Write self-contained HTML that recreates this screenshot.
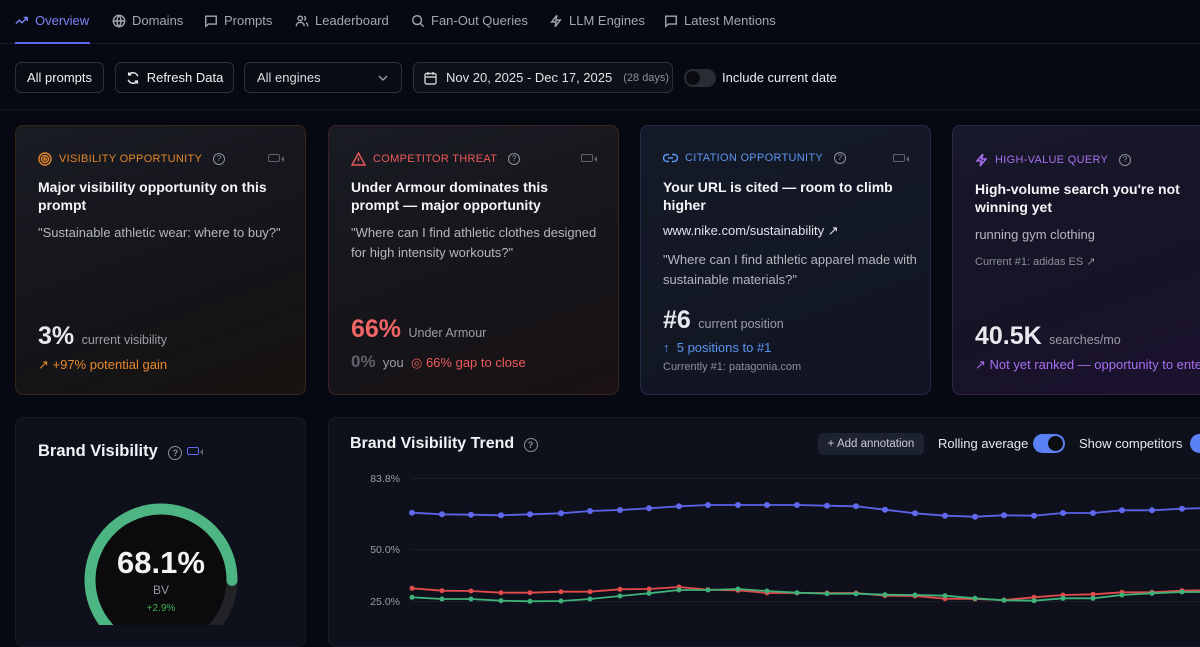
<!DOCTYPE html>
<html><head><meta charset="utf-8"><style>
*{box-sizing:border-box;margin:0;padding:0}
body{width:1200px;height:625px;overflow:hidden;background:#070912;font-family:"Liberation Sans",sans-serif;color:#e8e9ee;position:relative}
.abs{position:absolute}
.nav{top:0;left:0;width:1200px;height:44px;border-bottom:1px solid #1b1e29}
.ni{position:absolute;top:13px;font-size:13px;color:#a3a6b3;display:flex;align-items:center;gap:6px}
.ni svg{width:14px;height:14px;stroke:currentColor;fill:none;stroke-width:1.6}
.btn{position:absolute;top:62px;height:31px;border:1px solid #2c303c;border-radius:6px;font-size:13px;display:flex;align-items:center;color:#f1f2f5;background:#0a0c14}
.card{position:absolute;border-radius:8px;border:1px solid #2a2420}
.lbl{position:absolute;top:26px;left:22px;font-size:11px;letter-spacing:.3px;display:flex;align-items:center;gap:7px}
.q{display:inline-block;width:12px;height:12px;border:1.3px solid #8c8f99;border-radius:50%;font-size:8px;line-height:10px;text-align:center;color:#8c8f99;margin-left:4px}
.cam{position:absolute;top:28px;width:12px;height:8px;border:1.3px solid #5f626c;border-radius:2px}
.cam:after{content:"";position:absolute;right:-5px;top:1px;border:3px solid transparent;border-right-color:#5f626c}
.t{position:absolute;left:22px;width:250px;font-size:14px;font-weight:bold;line-height:18px;color:#f4f5f7}
.s{position:absolute;left:22px;font-size:13px;color:#b5b7bf;line-height:19.5px}
.big{font-size:25px;font-weight:bold}
</style></head><body>
<div class="abs nav"></div>
<div class="abs" style="top:42px;left:15px;width:75px;height:2px;background:#5f68ee"></div>
<div class="ni" style="left:15px;color:#7b83f5"><svg viewBox="0 0 16 16"><path d="M1 11l4-4 3 3 6-6M10 4h4v4"/></svg>Overview</div>
<div class="ni" style="left:112px"><svg viewBox="0 0 16 16"><circle cx="8" cy="8" r="6.5"/><path d="M1.5 8h13M8 1.5c-3 3.5-3 9.5 0 13M8 1.5c3 3.5 3 9.5 0 13"/></svg>Domains</div>
<div class="ni" style="left:204px"><svg viewBox="0 0 16 16"><path d="M2 2.5h12v9H5l-3 2.5z"/></svg>Prompts</div>
<div class="ni" style="left:295px"><svg viewBox="0 0 16 16"><circle cx="6" cy="5" r="2.5"/><path d="M1.5 14c0-3 2-4.5 4.5-4.5s4.5 1.5 4.5 4.5M10.5 2.8a2.4 2.4 0 010 4.5M12.5 9.8c1.3.6 2 2 2 4.2"/></svg>Leaderboard</div>
<div class="ni" style="left:411px"><svg viewBox="0 0 16 16"><circle cx="7" cy="7" r="5"/><path d="M11 11l3.5 3.5"/></svg>Fan-Out Queries</div>
<div class="ni" style="left:549px"><svg viewBox="0 0 16 16"><path d="M9 1.5L3 9h5l-1 5.5L13 7H8z"/></svg>LLM Engines</div>
<div class="ni" style="left:664px"><svg viewBox="0 0 16 16"><path d="M2 2.5h12v9H5l-3 2.5z"/></svg>Latest Mentions</div>

<div class="btn" style="left:15px;width:89px;justify-content:center">All prompts</div>
<div class="btn" style="left:115px;width:119px;justify-content:center;gap:7px"><svg width="14" height="14" viewBox="0 0 16 16" fill="none" stroke="#e8e9ee" stroke-width="1.6"><path d="M13.5 6A6 6 0 003 4.5M2.5 10a6 6 0 0010.5 1.5M3 1.5v3h3M13 14.5v-3h-3"/></svg>Refresh Data</div>
<div class="btn" style="left:244px;width:158px;padding-left:12px;color:#dcdde2">All engines<svg style="position:absolute;right:13px;top:12px" width="10" height="6" viewBox="0 0 10 6" fill="none" stroke="#9a9ca6" stroke-width="1.4"><path d="M1 1l4 4 4-4"/></svg></div>
<div class="btn" style="left:413px;width:260px;padding-left:10px;gap:9px;color:#e2e3e8;background:#0e1018"><svg width="13" height="14" viewBox="0 0 13 14" fill="none" stroke="#c9cad0" stroke-width="1.4"><rect x="1" y="2.5" width="11" height="10.5" rx="1.5"/><path d="M1 6h11M4 1v3M9 1v3"/></svg>Nov 20, 2025 - Dec 17, 2025 <span style="font-size:11px;color:#8c8f99;margin-left:2px">(28 days)</span></div>
<div class="abs" style="left:684px;top:69px;width:32px;height:18px;border-radius:9px;background:#2a2c33"><div style="position:absolute;left:2px;top:2px;width:14px;height:14px;border-radius:50%;background:#0b0c10"></div></div>
<div class="abs" style="left:722px;top:70px;font-size:13px;color:#eceef2">Include current date</div>
<div class="abs" style="left:0;top:109px;width:1200px;height:1px;background:#141722"></div>

<!-- card 1 -->
<div class="card" style="left:15px;top:125px;width:291px;height:270px;background:linear-gradient(160deg,#1a1c24,#141419 60%,#17130f);border-color:#35261d">
<div class="lbl" style="color:#e3862a"><svg width="14" height="14" viewBox="0 0 14 14" fill="none" stroke="#e3862a" stroke-width="1.4"><circle cx="7" cy="7" r="6"/><circle cx="7" cy="7" r="3.5"/><circle cx="7" cy="7" r="1.2"/></svg>VISIBILITY OPPORTUNITY<span class="q">?</span></div>
<div class="cam" style="left:252px"></div>
<div class="t" style="top:52px">Major visibility opportunity on this prompt</div>
<div class="s" style="top:97px">"Sustainable athletic wear: where to buy?"</div>
<div class="abs" style="left:22px;top:196px"><span class="big">3%</span> <span style="font-size:12.5px;color:#9c9ea7;margin-left:3px">current visibility</span></div>
<div class="abs" style="left:22px;top:231px;font-size:13px;color:#e8882c">↗ +97% potential gain</div>
</div>
<!-- card 2 -->
<div class="card" style="left:328px;top:125px;width:291px;height:270px;background:linear-gradient(160deg,#1a1c24,#151419 60%,#1a1214);border-color:#3a2224">
<div class="lbl" style="color:#ec5a5a"><svg width="15" height="14" viewBox="0 0 15 14" fill="none" stroke="#ec5a5a" stroke-width="1.4"><path d="M7.5 1L14 13H1z"/><path d="M7.5 5.5v3.5M7.5 10.6v.5"/></svg>COMPETITOR THREAT<span class="q">?</span></div>
<div class="cam" style="left:252px"></div>
<div class="t" style="top:52px;width:215px">Under Armour dominates this prompt — major opportunity</div>
<div class="s" style="top:97px;width:260px">"Where can I find athletic clothes designed for high intensity workouts?"</div>
<div class="abs" style="left:22px;top:189px"><span class="big" style="color:#f06565">66%</span> <span style="font-size:12.5px;color:#9c9ea7;margin-left:3px">Under Armour</span></div>
<div class="abs" style="left:22px;top:226px;font-size:13px;color:#9c9ea7"><span style="font-size:17px;font-weight:bold;color:#5f626c">0%</span>&nbsp; you&nbsp; <span style="color:#ec5a5a">◎ 66% gap to close</span></div>
</div>
<!-- card 3 -->
<div class="card" style="left:640px;top:125px;width:291px;height:270px;background:linear-gradient(160deg,#151a28,#111522);border-color:#1f2a44">
<div class="lbl" style="color:#5c94f0"><svg width="15" height="10" viewBox="0 0 15 10" fill="none" stroke="#5c94f0" stroke-width="1.5"><path d="M6 1.5H4a3.5 3.5 0 000 7h2M9 1.5h2a3.5 3.5 0 010 7H9M5 5h5"/></svg>CITATION OPPORTUNITY<span class="q">?</span></div>
<div class="cam" style="left:252px"></div>
<div class="t" style="top:52px;width:240px">Your URL is cited — room to climb higher</div>
<div class="s" style="top:95px;color:#e2e3e8">www.nike.com/sustainability ↗</div>
<div class="s" style="top:124px;width:260px">"Where can I find athletic apparel made with sustainable materials?"</div>
<div class="abs" style="left:22px;top:180px"><span class="big">#6</span> <span style="font-size:12.5px;color:#9c9ea7;margin-left:3px">current position</span></div>
<div class="abs" style="left:22px;top:214px;font-size:13px;color:#5c94f0">↑&nbsp; 5 positions to #1</div>
<div class="abs" style="left:22px;top:235px;font-size:11px;color:#8c8f99">Currently #1: patagonia.com</div>
</div>
<!-- card 4 -->
<div class="card" style="left:952px;top:125px;width:260px;height:270px;background:linear-gradient(160deg,#17182a,#161326 60%,#1c1230);border-color:#2e2444">
<div class="lbl" style="color:#a86ff0;top:27px"><svg width="13" height="14" viewBox="0 0 13 14" fill="none" stroke="#a86ff0" stroke-width="1.5"><path d="M8 1L2 8h4.5L5 13l6-7H6.5z"/></svg>HIGH-VALUE QUERY<span class="q">?</span></div>
<div class="t" style="top:54px;width:230px">High-volume search you're not winning yet</div>
<div class="s" style="top:99px">running gym clothing</div>
<div class="abs" style="left:22px;top:129px;font-size:11px;color:#8c8f99">Current #1: adidas ES ↗</div>
<div class="abs" style="left:22px;top:196px;white-space:nowrap"><span class="big">40.5K</span> <span style="font-size:12.5px;color:#9c9ea7;margin-left:3px">searches/mo</span></div>
<div class="abs" style="left:22px;top:231px;font-size:13px;color:#a86ff0;white-space:nowrap">↗ Not yet ranked — opportunity to enter</div>
</div>

<!-- bottom -->
<div class="card" style="left:15px;top:417px;width:291px;height:230px;background:#0e111b;border-color:#171a26">
<div class="abs" style="left:22px;top:24px;font-size:16.5px;font-weight:bold;color:#f1f2f5">Brand Visibility <span class="q" style="width:14px;height:14px;line-height:12px;font-size:9px;margin-left:6px">?</span></div>
<div class="cam" style="left:171px;top:29px;border-color:#6366f1"></div>
</div>
<svg class="abs" style="left:0;top:0" width="320" height="625">
<circle cx="161" cy="580" r="71" fill="#0b0b0e" stroke="#222326" stroke-width="11"/>
<circle cx="161" cy="580" r="71" fill="none" stroke="#4db582" stroke-width="11" stroke-linecap="round" stroke-dasharray="303.8 142.3" transform="rotate(115 161 580)"/>
<text x="161" y="573" text-anchor="middle" font-family="Liberation Sans" font-size="31" font-weight="bold" fill="#f3f3f5">68.1%</text>
<text x="161" y="594" text-anchor="middle" font-family="Liberation Sans" font-size="12" fill="#9a9ba2">BV</text>
<text x="161" y="611" text-anchor="middle" font-family="Liberation Sans" font-size="10" fill="#3fae54">+2.9%</text>
</svg>

<div class="card" style="left:328px;top:417px;width:890px;height:230px;background:#0e111b;border-color:#171a26">
<div class="abs" style="left:21px;top:17px;font-size:16px;font-weight:bold;color:#f1f2f5">Brand Visibility Trend <span class="q" style="width:14px;height:14px;line-height:12px;font-size:9px;margin-left:5px">?</span></div>
<div class="abs" style="left:489px;top:15px;width:106px;height:22px;border-radius:5px;background:#1d2230;font-size:11.5px;color:#c9cbd2;line-height:22px;text-align:center">+ Add annotation</div>
<div class="abs" style="left:609px;top:18px;font-size:13px;color:#e8e9ee">Rolling average</div>
<div class="abs" style="left:704px;top:16px;width:32px;height:19px;border-radius:10px;background:#5b82f5"><div style="position:absolute;right:2px;top:2px;width:15px;height:15px;border-radius:50%;background:#0b0c10"></div></div>
<div class="abs" style="left:750px;top:18px;font-size:13px;color:#e8e9ee">Show competitors</div>
<div class="abs" style="left:861px;top:16px;width:32px;height:19px;border-radius:10px;background:#5b82f5"></div>
</div>
<svg class="abs" style="left:0;top:0" width="1200" height="625" font-family="Liberation Sans" font-size="10.5" fill="#9a9ca6">
<text x="400" y="482" text-anchor="end">83.8%</text>
<text x="400" y="553" text-anchor="end">50.0%</text>
<text x="400" y="605" text-anchor="end">25.0%</text>
<g stroke="#1c1f2a" stroke-width="1"><path d="M412 478.5H1200M412 549.5H1200M412 601.5H1200"/></g>
<g fill="none" stroke-width="1.8">
<polyline stroke="#5b63e8" points="412,512.7 442,514.3 471,514.7 501,515.3 530,514.3 561,513.3 590,511 620,510 649,508.3 679,506.3 708,505 738,505 767,505 797,505 827,505.7 856,506.3 885,509.7 915,513.3 945,515.7 975,516.7 1004,515.3 1034,515.7 1063,513 1093,513 1122,510.3 1152,510.3 1182,508.7 1211,508"/>
<polyline stroke="#e24b4b" points="412,588.3 442,590.7 471,591 501,592.7 530,592.7 561,591.7 590,591.7 620,589.3 649,589 679,587 708,589.7 738,590.3 767,593 797,593 827,593 856,593 885,595.7 915,596 945,598.7 975,599 1004,600 1034,597.3 1063,595 1093,594.3 1122,592.3 1152,592.3 1182,590.7 1211,590"/>
<polyline stroke="#3fb27a" points="412,597.3 442,599 471,599 501,600.7 530,601.3 561,601 590,599 620,596 649,593.3 679,590 708,590 738,589 767,591 797,592.7 827,593.7 856,593.7 885,594.7 915,595 945,595.7 975,598.3 1004,600.3 1034,600.7 1063,598.3 1093,598.3 1122,595 1152,593.3 1182,592 1211,592"/>
</g>
</svg>
<svg class="abs" style="left:0;top:0" width="1200" height="625">
<g fill="#6068ee"><circle cx="412" cy="512.7" r="3"/><circle cx="442" cy="514.3" r="3"/><circle cx="471" cy="514.7" r="3"/><circle cx="501" cy="515.3" r="3"/><circle cx="530" cy="514.3" r="3"/><circle cx="561" cy="513.3" r="3"/><circle cx="590" cy="511" r="3"/><circle cx="620" cy="510" r="3"/><circle cx="649" cy="508.3" r="3"/><circle cx="679" cy="506.3" r="3"/><circle cx="708" cy="505" r="3"/><circle cx="738" cy="505" r="3"/><circle cx="767" cy="505" r="3"/><circle cx="797" cy="505" r="3"/><circle cx="827" cy="505.7" r="3"/><circle cx="856" cy="506.3" r="3"/><circle cx="885" cy="509.7" r="3"/><circle cx="915" cy="513.3" r="3"/><circle cx="945" cy="515.7" r="3"/><circle cx="975" cy="516.7" r="3"/><circle cx="1004" cy="515.3" r="3"/><circle cx="1034" cy="515.7" r="3"/><circle cx="1063" cy="513" r="3"/><circle cx="1093" cy="513" r="3"/><circle cx="1122" cy="510.3" r="3"/><circle cx="1152" cy="510.3" r="3"/><circle cx="1182" cy="508.7" r="3"/></g>
<g fill="#e24b4b"><circle cx="412" cy="588.3" r="2.5"/><circle cx="442" cy="590.7" r="2.5"/><circle cx="471" cy="591" r="2.5"/><circle cx="501" cy="592.7" r="2.5"/><circle cx="530" cy="592.7" r="2.5"/><circle cx="561" cy="591.7" r="2.5"/><circle cx="590" cy="591.7" r="2.5"/><circle cx="620" cy="589.3" r="2.5"/><circle cx="649" cy="589" r="2.5"/><circle cx="679" cy="587" r="2.5"/><circle cx="708" cy="589.7" r="2.5"/><circle cx="738" cy="590.3" r="2.5"/><circle cx="767" cy="593" r="2.5"/><circle cx="797" cy="593" r="2.5"/><circle cx="827" cy="593" r="2.5"/><circle cx="856" cy="593" r="2.5"/><circle cx="885" cy="595.7" r="2.5"/><circle cx="915" cy="596" r="2.5"/><circle cx="945" cy="598.7" r="2.5"/><circle cx="975" cy="599" r="2.5"/><circle cx="1004" cy="600" r="2.5"/><circle cx="1034" cy="597.3" r="2.5"/><circle cx="1063" cy="595" r="2.5"/><circle cx="1093" cy="594.3" r="2.5"/><circle cx="1122" cy="592.3" r="2.5"/><circle cx="1152" cy="592.3" r="2.5"/><circle cx="1182" cy="590.7" r="2.5"/></g>
<g fill="#3fb27a"><circle cx="412" cy="597.3" r="2.5"/><circle cx="442" cy="599" r="2.5"/><circle cx="471" cy="599" r="2.5"/><circle cx="501" cy="600.7" r="2.5"/><circle cx="530" cy="601.3" r="2.5"/><circle cx="561" cy="601" r="2.5"/><circle cx="590" cy="599" r="2.5"/><circle cx="620" cy="596" r="2.5"/><circle cx="649" cy="593.3" r="2.5"/><circle cx="679" cy="590" r="2.5"/><circle cx="708" cy="590" r="2.5"/><circle cx="738" cy="589" r="2.5"/><circle cx="767" cy="591" r="2.5"/><circle cx="797" cy="592.7" r="2.5"/><circle cx="827" cy="593.7" r="2.5"/><circle cx="856" cy="593.7" r="2.5"/><circle cx="885" cy="594.7" r="2.5"/><circle cx="915" cy="595" r="2.5"/><circle cx="945" cy="595.7" r="2.5"/><circle cx="975" cy="598.3" r="2.5"/><circle cx="1004" cy="600.3" r="2.5"/><circle cx="1034" cy="600.7" r="2.5"/><circle cx="1063" cy="598.3" r="2.5"/><circle cx="1093" cy="598.3" r="2.5"/><circle cx="1122" cy="595" r="2.5"/><circle cx="1152" cy="593.3" r="2.5"/><circle cx="1182" cy="592" r="2.5"/></g>
</svg>
</body></html>
